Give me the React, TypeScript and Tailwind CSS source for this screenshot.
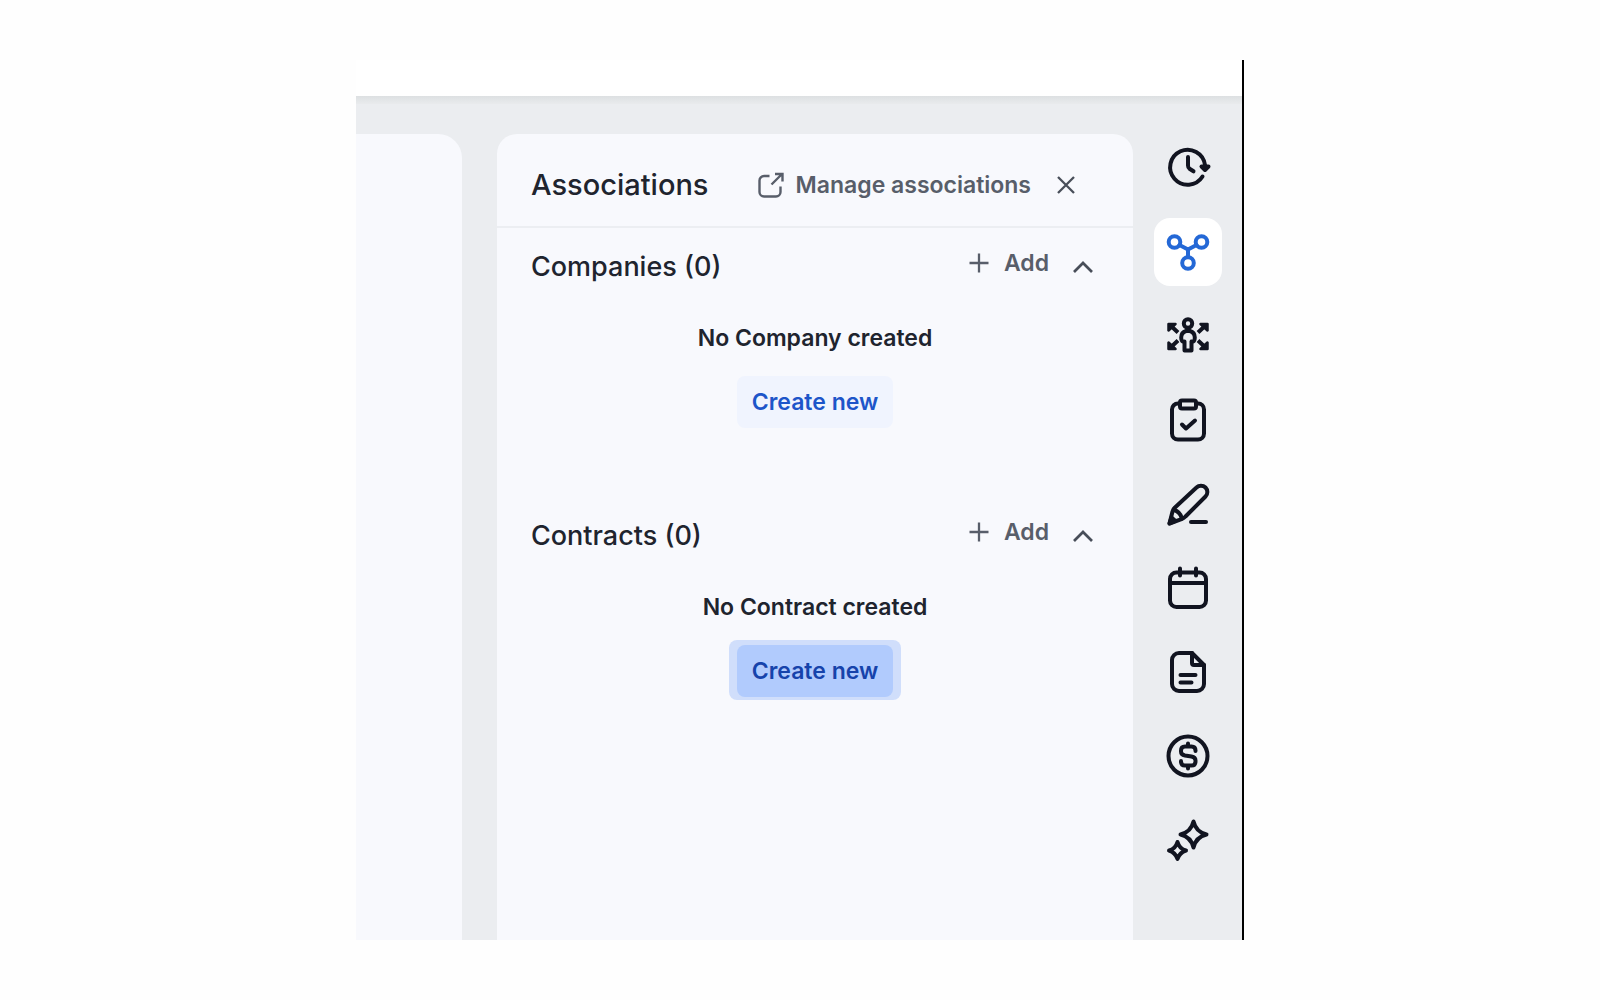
import React, { useState } from 'react';
import clsx from 'clsx';

type IconProps = { children: React.ReactNode };

const RailIcon: React.FC<IconProps> = ({ children }) => (
  <svg
    viewBox="0 0 48 48"
    className="h-12 w-12"
    fill="none"
    stroke="currentColor"
    strokeWidth="4"
    strokeLinecap="round"
    strokeLinejoin="round"
    aria-hidden="true"
  >
    {children}
  </svg>
);

const railItems = [
  {
    id: 'history',
    label: 'History',
    icon: (
      <>
        <path d="M38.5 32.5A17.5 17.5 0 1 1 41 21" />
        <path d="M24 13v8.500q0 2 1.500 3.200l4 2.600" />
        <path d="M37.500 22.500h7L41 26z" fill="currentColor" />
      </>
    ),
  },
  {
    id: 'associations',
    label: 'Associations',
    icon: (
      <>
        <circle cx="10.5" cy="14" r="5.8" />
        <circle cx="37.5" cy="14" r="5.8" />
        <circle cx="24" cy="35" r="5.8" />
        <path d="M15.500 17l8.500 4.500 8.500-4.500M24 22v7" />
      </>
    ),
  },
  {
    id: 'contacts',
    label: 'Contacts',
    icon: (
      <>
        <circle cx="24" cy="11.5" r="4.2" />
        <path d="M22 19h4q4.800 1.500 4.800 6.500t-3.300 4V38.500h-7V29.500q-3.300 1-3.300-4T22 19z" />
        <path d="M14 20.500l-8-7.500M34 20.500l8-7.500M14 28.500l-8 7.500M34 28.500l8 7.500" strokeLinecap="butt" />
        <path d="M4.500 18.500v-6.500h7zM43.500 18.500v-6.500h-7zM4.500 30.500v6.500h7zM43.500 30.500v6.500h-7z" fill="currentColor" strokeWidth="2.5" />
      </>
    ),
  },
  {
    id: 'tasks',
    label: 'Tasks',
    icon: (
      <>
        <path d="M16 7.500h-2a6 6 0 0 0-6 6v24a6 6 0 0 0 6 6h20a6 6 0 0 0 6-6v-24a6 6 0 0 0-6-6H32" />
        <rect x="16" y="4.5" width="16" height="8" rx="2" />
        <path d="M18 28.500l4 4 9-8" />
      </>
    ),
  },
  {
    id: 'notes',
    label: 'Notes',
    icon: (
      <>
        <path d="M32.500 7.500a6.300 6.300 0 0 1 9 9L21.500 36.500q-1.500 1.700-4 2.700L5.500 43.500 8.500 31.500q.7-2.200 2.500-4z" />
        <path d="M10 30q6 1.500 8 8.500" />
        <path d="M5.500 43.500l2-6 4 3.500z" fill="currentColor" />
        <path d="M27 42h15" />
      </>
    ),
  },
  {
    id: 'meetings',
    label: 'Meetings',
    icon: (
      <>
        <rect x="6" y="8.5" width="36" height="34.5" rx="6.5" />
        <path d="M6 19h36M16 4.500v7M32 4.500v7" />
      </>
    ),
  },
  {
    id: 'files',
    label: 'Files',
    icon: (
      <>
        <path d="M28 5H15a7 7 0 0 0-7 7v24a7 7 0 0 0 7 7h18a7 7 0 0 0 7-7V17z" />
        <path d="M28 5v10q0 2 2 2h10" />
        <path d="M16.500 27h15M16.500 34.500h11" />
      </>
    ),
  },
  {
    id: 'deals',
    label: 'Deals',
    icon: (
      <>
        <circle cx="24" cy="24" r="19.5" />
        <path d="M31.500 19v-.5q0-4-4-4h-6.500q-4 0-4 4v1q0 3.200 4 4l6.500 1q4 .8 4 4v1q0 4-4 4h-6.500q-4 0-4-4v-.5M24 11.500v3M24 33.500v3" />
      </>
    ),
  },
  {
    id: 'assistant',
    label: 'Assistant',
    icon: (
      <>
        <path d="M29.500 5.500Q32 16 42.500 18.500 32 21 29.500 31.500 27 21 16.500 18.500 27 16 29.500 5.500z" />
        <path d="M13.500 26Q15.500 33 22 34.500 15.500 36.500 13.500 43 11.500 36.500 5 34.500 11.500 33 13.500 26z" />
      </>
    ),
  },
];

const sections = [
  { id: 'companies', title: 'Companies (0)', empty: 'No Company created', focused: false },
  { id: 'contracts', title: 'Contracts (0)', empty: 'No Contract created', focused: true },
];

type SectionProps = { title: string; empty: string; focused: boolean };

const Section: React.FC<SectionProps> = ({ title, empty, focused }) => {
  const [open, setOpen] = useState(true);

  return (
    <section className={clsx(open && 'min-h-[269px]')}>
      <div className="flex items-center justify-between pt-[21px] pr-10 pl-[34px]">
        <h2 className="text-[27px] leading-9 font-medium text-[#20242e]">{title}</h2>
        <div className="flex items-center">
          <button className="flex items-center gap-[15px] pb-2 text-[23px] leading-7 font-semibold text-[#585e6a]">
            <svg viewBox="0 0 20 20" className="h-5 w-5" stroke="currentColor" strokeWidth="2.3" aria-hidden="true">
              <path d="M10 0.500v19M0.500 10h19" />
            </svg>
            Add
          </button>
          <button className="ml-6" aria-label={`Toggle ${title}`} aria-expanded={open} onClick={() => setOpen(!open)}>
            <svg
              viewBox="0 0 20 12"
              className={clsx('block h-3 w-5', !open && 'rotate-180')}
              fill="none"
              stroke="currentColor"
              strokeWidth="2.7"
              aria-hidden="true"
            >
              <path d="M1 11l9-9 9 9" />
            </svg>
          </button>
        </div>
      </div>
      {open && (
        <div className="flex flex-col items-center pt-[35px]">
          <p className="text-[23px] leading-9 font-semibold text-[#20242e]">{empty}</p>
          <div className={clsx('mt-[15px] rounded-lg px-2 pt-[5px] pb-[3px]', focused && 'bg-[#d0defb]')}>
            <button
              className={clsx(
                'block h-[52px] rounded-lg px-[15px] text-[23px] font-semibold',
                focused ? 'bg-[#b1cbfd] text-[#1643ab]' : 'bg-[#f0f4fe] text-[#1d55c9]',
              )}
            >
              Create new
            </button>
          </div>
        </div>
      )}
    </section>
  );
};

const App: React.FC = () => {
  const [active, setActive] = useState('associations');

  return (
    <div className="flex min-h-screen justify-center bg-[#fefefe] py-[60px] font-['Inter',sans-serif] text-[#484e59]">
      <div className="flex w-full max-w-[888px] flex-col border-r-2 border-black">
        <header className="h-9 bg-white" />
        <div className="h-2 bg-linear-to-b from-[#dde0e2] to-[#e9ebed]" />
        <div className="flex flex-1 bg-[#ebedf0] pt-[30px]">
          <div className="w-[106px] rounded-tr-3xl bg-[#f8f9fd]" />

          <main className="ml-[35px] flex-1 rounded-t-[20px] bg-[#f8f9fd]">
            <div className="flex h-[94px] items-center border-b-2 border-[#eceef2] pt-[10px] pr-[58px] pl-[34px]">
              <h1 className="text-[29px] leading-9 font-medium text-[#20242e]">Associations</h1>
              <a
                href="#manage"
                className="ml-auto flex items-center gap-3 text-[23px] leading-9 font-semibold whitespace-nowrap text-[#585e6a]"
              >
                <svg viewBox="0 0 26 26" className="h-[26px] w-[26px]" fill="none" stroke="currentColor" strokeWidth="2.4" aria-hidden="true">
                  <path d="M11.500 4H6a4.500 4.500 0 0 0-4.500 4.500V20A4.500 4.500 0 0 0 6 24.500h12a4.500 4.500 0 0 0 4.500-4.500v-5.500M13.500 12.500L24 2M17 2h7.500v7.500" />
                </svg>
                Manage associations
              </a>
              <button className="ml-[26px]" aria-label="Close">
                <svg viewBox="0 0 18 18" className="block h-[18px] w-[18px]" stroke="currentColor" strokeWidth="2.3" aria-hidden="true">
                  <path d="M1 1l16 16M17 1L1 17" />
                </svg>
              </button>
            </div>

            {sections.map(({ id, ...section }) => (
              <Section key={id} {...section} />
            ))}
          </main>

          <nav className="flex w-[109px] flex-col items-center gap-4" aria-label="Record tools">
            {railItems.map(({ id, label, icon }) => (
              <button
                key={id}
                aria-label={label}
                onClick={() => setActive(id)}
                className={clsx(
                  'flex h-[68px] w-[68px] items-center justify-center rounded-2xl',
                  active === id ? 'bg-white text-[#2468d6]' : 'text-[#111420]',
                )}
              >
                <RailIcon>{icon}</RailIcon>
              </button>
            ))}
          </nav>
        </div>
      </div>
    </div>
  );
};

export default App;
